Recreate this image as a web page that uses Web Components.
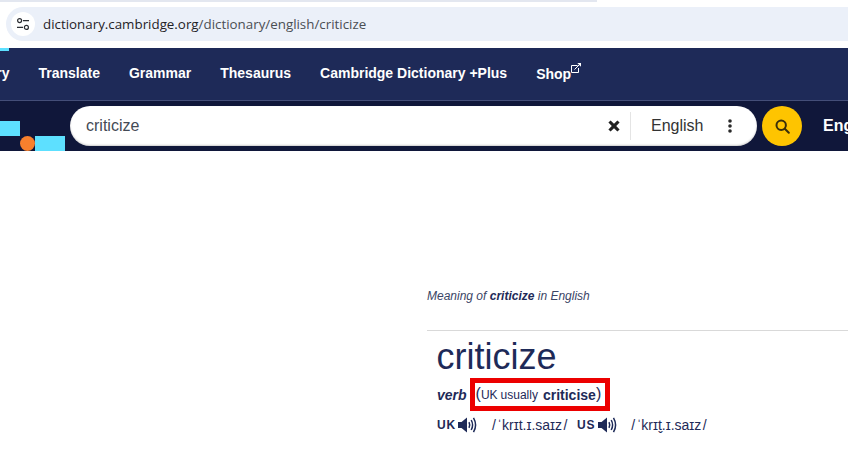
<!DOCTYPE html>
<html lang="en"><head><meta charset="utf-8"><title>criticize</title>
<style>
html,body{margin:0;padding:0;background:#fff;width:848px;height:456px;overflow:hidden;font-family:"Liberation Sans",Arial,sans-serif}
</style></head><body>
<browser-chrome url-host="dictionary.cambridge.org" url-path="/dictionary/english/criticize"></browser-chrome>
<site-nav>
<a>Dictionary</a><a>Translate</a><a>Grammar</a><a>Thesaurus</a><a>Cambridge Dictionary +Plus</a><a>Shop<sup-icon></sup-icon></a>
</site-nav>
<search-bar value="criticize" lang-name="English"></search-bar>
<entry-page></entry-page>
<script>
function def(name,html){customElements.define(name,class extends HTMLElement{connectedCallback(){if(this.shadowRoot)return;const r=this.attachShadow({mode:'open'});r.innerHTML=typeof html==='function'?html(this):html;}});}
def('browser-chrome',e=>`<style>
:host{display:block;height:48px;box-sizing:border-box;background:#fff;position:relative}
.strip{height:2px;width:597px;background:#e3e7f0}
.bar{margin:5px 0 0 6px;height:34px;background:#ebf0f9;border-radius:17px 0 0 17px;display:flex;align-items:center;padding-left:5px}
.tune{width:24px;height:24px;border-radius:50%;background:#fff;display:flex;align-items:center;justify-content:center;flex:none}
.url{margin-left:8px;font:13.35px "Open Sans","Noto Sans",sans-serif;color:#4a4e53;white-space:nowrap}
.url b{font-weight:400;color:#1f2227}
</style><div class="strip"></div><div class="bar"><span class="tune"><svg width="14" height="14" viewBox="0 0 14 14" fill="none" stroke="#2b2e33" stroke-width="1.2"><circle cx="3.6" cy="3.6" r="2"/><path d="M7 3.6h6M1 10.4h6"/><circle cx="10.4" cy="10.4" r="2"/></svg></span><span class="url"><b>${e.getAttribute('url-host')}</b>${e.getAttribute('url-path')}</span></div>`);
def('sup-icon',`<style>:host{display:inline-block;vertical-align:6px;width:10px;height:10px}svg{display:block}</style>
<svg width="10" height="10" viewBox="0 0 10 10" fill="none" stroke="#fff" stroke-width="1"><path d="M6.5 2.500H.5v7h7V5"/><path d="M3.500 6.500 8.500 1.500"/><path d="M6.300 0h3.700v3.700z" fill="#fff" stroke="none"/></svg>`);
def('site-nav',`<style>
:host{display:flex;height:53px;box-sizing:border-box;background:#1e2a58;border-bottom:1px solid #444e78;align-items:center;gap:29px;margin-left:-59px;padding-bottom:3px;position:relative;color:#fff;font:bold 14px "Liberation Sans",Arial,sans-serif;white-space:nowrap}
::slotted(a){color:#fff}
.tick{position:absolute;left:59px;top:0;width:9px;height:3px;background:#5de0ff}
</style><span class="tick"></span><slot></slot>`);
def('search-bar',e=>`<style>
:host{display:block;height:50px;box-sizing:border-box;background:#10173a;padding-top:5px;position:relative;overflow:hidden}
.row{display:flex;align-items:flex-start;margin-left:70px;gap:5px;white-space:nowrap}
.pill{flex:none;width:687px;height:40px;box-sizing:border-box;background:#fff;border-radius:20px;display:flex;align-items:center;box-shadow:inset 0 -1px 2px #0003;color:#444}
.q{flex:1;padding-left:16px;font:16px "Liberation Sans",Arial,sans-serif;color:#444a55}
.x{width:12px;height:12px;display:block;margin-right:10px}
.sep{width:1px;height:28px;background:#e4e4e4}
.lang{font:16px "Liberation Sans",Arial,sans-serif;color:#333;margin-left:20px;width:53px}
.dots{margin:0 25px 0 24px;display:block}
.go{width:40px;height:40px;border-radius:50%;background:#fec400;display:flex;align-items:center;justify-content:center;flex:none}
.eng{margin-left:16px;color:#fff;font:bold 16px "Liberation Sans",Arial,sans-serif;line-height:40px}
.d{position:absolute;background:#5de0ff}
.a{left:0;top:20px;width:20px;height:15px}.b{left:35px;top:35px;width:30px;height:15px}
.c{position:absolute;left:20px;top:35px;width:15px;height:15px;border-radius:50%;background:#f7802d}
</style><span class="d a"></span><span class="d b"></span><span class="c"></span>
<div class="row"><div class="pill"><span class="q">${e.getAttribute('value')}</span>
<svg class="x" viewBox="0 0 12 12"><path d="M2.600.4 6 3.800 9.400.4 11.600 2.600 8.200 6 11.600 9.400 9.400 11.600 6 8.200 2.600 11.600.4 9.400 3.800 6 .4 2.600z" fill="#222"/></svg>
<span class="sep"></span><span class="lang">${e.getAttribute('lang-name')}</span>
<svg class="dots" width="4" height="14" viewBox="0 0 4 14" fill="#2a2a2a"><circle cx="2" cy="2" r="1.800"/><circle cx="2" cy="7" r="1.800"/><circle cx="2" cy="12" r="1.800"/></svg></div>
<span class="go"><svg width="15" height="15" viewBox="0 0 15 15" fill="none" stroke="#3a2f0a" stroke-width="2"><circle cx="6.200" cy="6.200" r="4.700"/><path d="M9.800 9.800 13.800 13.800" stroke-linecap="round"/></svg></span>
<span class="eng">English</span></div>`);
const spk=`<svg width="20" height="18" viewBox="0 0 20 18" style="display:block"><path d="M0 6h3.500L9 1.500v15L3.500 12H0z" fill="#1e2a58"/><g fill="none" stroke="#1e2a58" stroke-width="1.500"><path d="M11 6.200q1.400 2.800 0 5.600"/><path d="M13.200 4q2.800 5 0 10"/><path d="M15.500 1.800q4.200 7.200 0 14.400"/></g></svg>`;
def('entry-page',`<style>
:host{display:block;padding:138px 0 0 427px;color:#1e2a58;font-family:"Liberation Sans",Arial,sans-serif;white-space:nowrap}
.crumb{font:italic 12px/14px "Liberation Sans",Arial,sans-serif;color:#3b4566;height:14px}
.crumb b{font-weight:bold;color:#1e2a58}
hr{border:0;border-top:1px solid #d9d9d9;margin:27px 0 0;height:0}
.body{padding-left:10px}
h1{margin:7px 0 0 -.5px;font:400 36px/38px "Liberation Sans",Arial,sans-serif;color:#1e2a58}
.gram{display:flex;align-items:center;height:33px;margin-top:2px}
.pos{font:italic bold 14px "Liberation Sans",Arial,sans-serif}
.box{margin-left:3px;border:5px solid #ec0000;height:23px;padding:0 4px 0 1px;display:flex;align-items:center;font-size:12px}
.box .p{font-size:16px;font-weight:400;margin-top:-1px}
.box b{font-size:14px;margin-left:5px}
.box .us{margin-left:3px}
.pron{display:flex;align-items:center;height:22px;margin-top:3px;font-size:14px}
.reg{font-weight:bold;font-size:12px;letter-spacing:.8px;margin-right:2.500px}
.ipa{font:14px "Liberation Sans","DejaVu Sans",sans-serif;color:#1e2a58;margin-left:13.500px;margin-right:9.500px}
.ipa i{font-style:normal;margin:0 1.500px}
</style><div class="crumb">Meaning of <b>criticize</b> in English</div><hr>
<div class="body"><h1>criticize</h1>
<div class="gram"><span class="pos">verb</span><span class="box"><span class="p">(</span>UK<span class="us">usually</span><b>criticise</b><span class="p">)</span></span></div>
<div class="pron"><span class="reg">UK</span>${spk}<span class="ipa">/<i>ˈkrɪt.ɪ.saɪz</i>/</span><span class="reg">US</span>${spk}<span class="ipa">/<i>ˈkrɪt̬.ɪ.saɪz</i>/</span></div></div>`);
</script></body></html>
